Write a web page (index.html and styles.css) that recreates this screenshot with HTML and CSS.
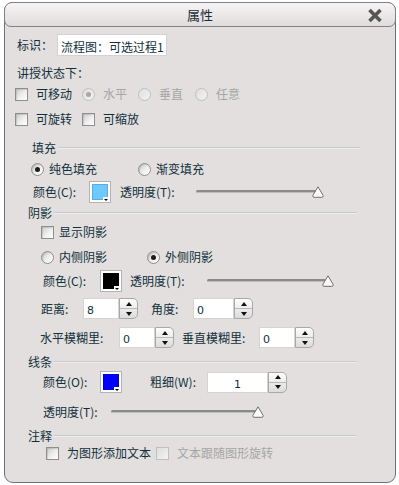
FILE: index.html
```html
<!DOCTYPE html>
<html lang="zh">
<head>
  <meta charset="UTF-8">
  <meta name="viewport" content="width=device-width, initial-scale=1.0">
  <title>属性</title>
  <link rel="stylesheet" href="styles.css">
</head>
<body>

  <!-- 属性对话框 -->
  <div class="window">
    <div class="titlebar">
      <span class="title">属性</span>
      <svg class="close" width="16" height="15" viewBox="0 0 16 15">
        <path d="M2.5 2 L13.5 13 M13.5 2 L2.5 13" stroke="#565656" stroke-width="3.6"/>
      </svg>
    </div>

    <div class="row r-id">
      <span class="w-40">标识：</span>
      <div class="field f-id">流程图：可选过程1</div>
    </div>

    <div class="row r-teach">讲授状态下：</div>

    <div class="row r-move">
      <span class="opt w-67"><span class="cb"></span>可移动</span>
      <span class="opt dim w-56"><span class="rb on"></span>水平</span>
      <span class="opt dim w-57"><span class="rb"></span>垂直</span>
      <span class="opt dim"><span class="rb"></span>任意</span>
    </div>

    <div class="row r-rotate">
      <span class="opt w-67"><span class="cb"></span>可旋转</span>
      <span class="opt"><span class="cb"></span>可缩放</span>
    </div>

    <!-- 填充 -->
    <div class="row sec sec-fill">填充</div>
    <div class="row r-filltype">
      <span class="opt tight w-107"><span class="rb on"></span>纯色填充</span>
      <span class="opt tight"><span class="rb"></span>渐变填充</span>
    </div>
    <div class="row r-fillcolor">
      <span class="w-56">颜色(C):</span>
      <span class="swatch"><b class="sky"></b></span>
      <span class="w-76 ml-9">透明度(T):</span>
      <span class="slider w-128">
        <svg class="thumb" width="12" height="12" viewBox="0 0 12 12"><path d="M6 .8 L11.2 9.5 Q11.5 11.3 9.8 11.3 H2.2 Q.5 11.3 .8 9.5 Z" fill="#fbfbfb" stroke="#6f6f6f"/></svg>
      </span>
    </div>

    <!-- 阴影 -->
    <div class="row sec sec-shadow">阴影</div>
    <div class="row r-showshadow">
      <span class="opt tight"><span class="cb"></span>显示阴影</span>
    </div>
    <div class="row r-shadowtype">
      <span class="opt tight w-106"><span class="rb"></span>内侧阴影</span>
      <span class="opt tight"><span class="rb on"></span>外侧阴影</span>
    </div>
    <div class="row r-shadowcolor">
      <span class="w-57">颜色(C):</span>
      <span class="swatch"><b class="black"></b></span>
      <span class="w-77 ml-8">透明度(T):</span>
      <span class="slider w-127">
        <svg class="thumb" width="12" height="12" viewBox="0 0 12 12"><path d="M6 .8 L11.2 9.5 Q11.5 11.3 9.8 11.3 H2.2 Q.5 11.3 .8 9.5 Z" fill="#fbfbfb" stroke="#6f6f6f"/></svg>
      </span>
    </div>
    <div class="row r-dist">
      <span class="w-42">距离:</span>
      <span class="num w-36">8</span><span class="spin"><i class="up"></i><i class="down"></i></span>
      <span class="w-42 ml-13">角度:</span>
      <span class="num w-41">0</span><span class="spin"><i class="up"></i><i class="down"></i></span>
    </div>
    <div class="row r-blur">
      <span class="w-79">水平模糊里:</span>
      <span class="num w-36">0</span><span class="spin"><i class="up"></i><i class="down"></i></span>
      <span class="w-77 ml-8">垂直模糊里:</span>
      <span class="num w-36">0</span><span class="spin"><i class="up"></i><i class="down"></i></span>
    </div>

    <!-- 线条 -->
    <div class="row sec sec-line">线条</div>
    <div class="row r-linecolor">
      <span class="w-57">颜色(O):</span>
      <span class="swatch"><b class="blue"></b></span>
      <span class="w-57 ml-28">粗细(W):</span>
      <span class="num center w-61">1</span><span class="spin"><i class="up"></i><i class="down"></i></span>
    </div>
    <div class="row r-lineopacity">
      <span class="w-68">透明度(T):</span>
      <span class="slider w-153">
        <svg class="thumb" width="12" height="12" viewBox="0 0 12 12"><path d="M6 .8 L11.2 9.5 Q11.5 11.3 9.8 11.3 H2.2 Q.5 11.3 .8 9.5 Z" fill="#fbfbfb" stroke="#6f6f6f"/></svg>
      </span>
    </div>

    <!-- 注释 -->
    <div class="row sec sec-note">注释</div>
    <div class="row r-note">
      <span class="opt"><span class="cb"></span>为图形添加文本</span>
      <span class="opt dim ml-5"><span class="cb off"></span>文本跟随图形旋转</span>
    </div>
  </div>

</body>
</html>
```

FILE: styles.css
```css
/* Halaman dasar */
body {
  margin: 0;
  background: #ffffff;
  font-family: "Noto Sans CJK SC", "Noto Sans", sans-serif;
  font-size: 12px;
  color: #10303c;
}

/* Jendela dialog */
.window {
  box-sizing: border-box;
  width: 392px;
  height: 481px;
  margin: 2px 0 0 4px;
  border: 1px solid #6c7085;
  border-radius: 9px;
  background: #e3dfde;
}

.titlebar {
  position: relative;
  box-sizing: border-box;
  height: 25px;
  margin: -1px -1px 0;
  border: 1px solid #7c8092;
  border-radius: 8px 8px 7px 7px;
  background: linear-gradient(#f6f4f4, #e0dcdc);
  display: flex;
  align-items: center;
  justify-content: center;
}

.title {
  font-size: 13px;
  color: #1b2b33;
}

.close {
  position: absolute;
  right: 12px;
  top: 5px;
}

/* Baris */
.row {
  display: flex;
  align-items: center;
  height: 16px;
  line-height: 16px;
  white-space: nowrap;
}

.r-id { height: 22px; margin-top: 7px; padding-left: 12px; }
.r-teach { margin-top: 9px; padding-left: 12px; }
.r-move { margin-top: 5px; padding-left: 10px; }
.r-rotate { margin-top: 9px; padding-left: 10px; }
.sec-fill { margin-top: 13px; padding-left: 27px; padding-right: 35px; }
.r-filltype { margin-top: 5px; padding-left: 26px; }
.r-fillcolor { height: 22px; margin-top: 4px; padding-left: 28px; }
.sec-shadow { margin-top: 2px; padding-left: 23px; padding-right: 38px; }
.r-showshadow { margin-top: 3px; padding-left: 36px; }
.r-shadowtype { margin-top: 9px; padding-left: 36px; }
.r-shadowcolor { height: 22px; margin-top: 5px; padding-left: 38px; }
.r-dist { height: 21px; margin-top: 6px; padding-left: 36px; }
.r-blur { height: 21px; margin-top: 8px; padding-left: 35px; }
.sec-line { margin-top: 6px; padding-left: 23px; padding-right: 38px; }
.r-linecolor { height: 22px; margin-top: 1px; padding-left: 38px; }
.r-lineopacity { margin-top: 11px; padding-left: 38px; }
.sec-note { margin-top: 8px; padding-left: 23px; padding-right: 38px; }
.r-note { margin-top: 1px; padding-left: 41px; }

/* Judul bagian dengan garis */
.sec::after {
  content: "";
  flex: 1;
  margin-left: 2px;
  border-top: 1px solid #c6cacd;
  border-bottom: 1px solid #eeeeee;
}

/* Lebar dan jarak */
.w-36 { width: 36px; }
.w-40 { width: 40px; }
.w-41 { width: 41px; }
.w-42 { width: 42px; }
.w-56 { width: 56px; }
.w-57 { width: 57px; }
.w-61 { width: 61px; }
.w-67 { width: 67px; }
.w-68 { width: 68px; }
.w-76 { width: 76px; }
.w-77 { width: 77px; }
.w-79 { width: 79px; }
.w-106 { width: 106px; }
.w-107 { width: 107px; }
.w-127 { width: 127px; }
.w-128 { width: 128px; }
.w-153 { width: 153px; }
.ml-5 { margin-left: 5px; }
.ml-8 { margin-left: 8px; }
.ml-9 { margin-left: 9px; }
.ml-13 { margin-left: 13px; }
.ml-28 { margin-left: 28px; }

.dim { color: #a4a6a8; }

/* Kotak teks */
.field {
  box-sizing: border-box;
  height: 22px;
  padding: 4px 0 0 3px;
  background: #ffffff;
  border: 1px solid #d2d2d2;
  line-height: 16px;
}

.f-id { width: 110px; }

/* Pilihan: kotak centang dan tombol radio */
.opt {
  display: flex;
  align-items: center;
  gap: 8px;
}

.opt.tight { gap: 5px; }

.cb, .rb {
  flex: none;
  box-sizing: border-box;
  width: 13px;
  height: 13px;
  border: 1px solid #8e8e8e;
  background: linear-gradient(135deg, #cdcdcd 0%, #efefef 55%, #ffffff 100%);
  box-shadow: inset 1px 1px 1px rgba(0, 0, 0, 0.12);
}

.rb {
  position: relative;
  border-radius: 50%;
}

.rb.on::after {
  content: "";
  position: absolute;
  left: 3px;
  top: 3px;
  width: 5px;
  height: 5px;
  border-radius: 50%;
  background: #1c1c1c;
}

.dim .rb, .cb.off {
  border-color: #bdbfc1;
  background: linear-gradient(135deg, #dedede, #f3f3f3);
  box-shadow: none;
}

.dim .rb.on::after { background: #a8a8a8; }

/* Contoh warna */
.swatch {
  position: relative;
  box-sizing: border-box;
  width: 22px;
  height: 22px;
  padding: 2px;
  background: #ffffff;
  border: 1px solid #b1b3b6;
}

.swatch b {
  display: block;
  height: 100%;
  border: 1px solid rgba(0, 0, 0, 0.15);
  box-sizing: border-box;
}

.swatch::before {
  content: "";
  position: absolute;
  right: 1px;
  bottom: 1px;
  width: 6px;
  height: 4px;
  background: #ffffff;
}

.swatch::after {
  content: "";
  position: absolute;
  right: 2px;
  bottom: 1px;
  border-left: 2px solid transparent;
  border-right: 2px solid transparent;
  border-top: 2px solid #000000;
}

.sky { background: #6ccafe; }
.black { background: #000000; }
.blue { background: #0000ff; }

/* Penggeser transparansi */
.slider {
  position: relative;
  height: 12px;
  margin-top: -1px;
}

.slider::before {
  content: "";
  position: absolute;
  left: 0;
  right: 6px;
  top: 4px;
  height: 2px;
  background: #8a8a8a;
  border-bottom: 1px solid #bdbdbd;
  border-radius: 2px;
}

.thumb {
  position: absolute;
  right: 0;
  top: 0;
}

/* Kotak angka dan tombol putar */
.num {
  box-sizing: border-box;
  height: 21px;
  padding: 5px 0 0 3px;
  background: #ffffff;
  border: 1px solid #d4d4d4;
  font-family: "DejaVu Sans", sans-serif;
  font-size: 11px;
  line-height: 14px;
}

.num.center {
  padding-left: 0;
  text-align: center;
}

.spin {
  box-sizing: border-box;
  width: 19px;
  height: 21px;
  display: flex;
  flex-direction: column;
  border: 1px solid #a8a8a8;
  border-radius: 0 5px 5px 0;
  background: linear-gradient(#fdfdfd, #dcdcdc);
}

.spin i {
  flex: 1;
  display: flex;
  align-items: center;
  justify-content: center;
}

.spin i + i { border-top: 1px solid #b8b8b8; }

.spin i::after {
  content: "";
  border-left: 3px solid transparent;
  border-right: 3px solid transparent;
}

.spin .up::after { border-bottom: 4px solid #111111; }
.spin .down::after { border-top: 4px solid #111111; }
```
